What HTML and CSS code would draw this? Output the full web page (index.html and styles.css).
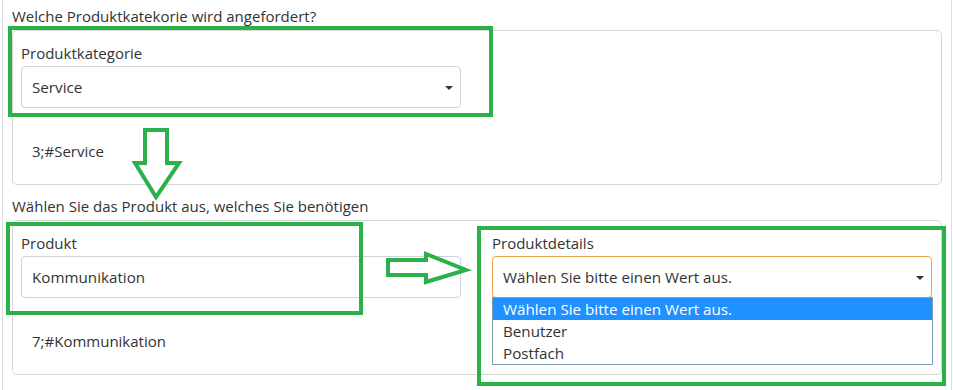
FILE: index.html
```html
<!DOCTYPE html>
<html lang="de">
<head>
<meta charset="utf-8">
<title>Produktanforderung</title>
<link rel="stylesheet" href="styles.css">
</head>
<body>
<div class="page">
  <div class="question">Welche Produktkatekorie wird angefordert?</div>
  <div class="card">
    <div class="row">
      <div class="col">
        <div class="label">Produktkategorie</div>
        <div class="select"><span class="select-text">Service</span><span class="caret"></span></div>
      </div>
    </div>
    <div class="value">3;#Service</div>
  </div>

  <div class="question q2">Wählen Sie das Produkt aus, welches Sie benötigen</div>
  <div class="card">
    <div class="row">
      <div class="col">
        <div class="label">Produkt</div>
        <div class="select"><span class="select-text">Kommunikation</span></div>
      </div>
      <div class="col dd-col">
        <div class="label">Produktdetails</div>
        <div class="select focused"><span class="select-text">Wählen Sie bitte einen Wert aus.</span><span class="caret"></span></div>
        <ul class="dropdown">
          <li class="opt active">Wählen Sie bitte einen Wert aus.</li>
          <li class="opt">Benutzer</li>
          <li class="opt">Postfach</li>
        </ul>
      </div>
    </div>
    <div class="value">7;#Kommunikation</div>
  </div>

  <svg class="annotations" width="953" height="390" viewBox="0 0 953 390" xmlns="http://www.w3.org/2000/svg">
    <g fill="none" stroke="#2bb04a" stroke-width="4" stroke-linejoin="miter">
      <rect x="10" y="28" width="481" height="87"/>
      <rect x="8" y="224" width="353" height="89"/>
      <rect x="479" y="228" width="465" height="156"/>
    </g>
    <g fill="#fff" stroke="#2bb04a" stroke-width="4" stroke-linejoin="miter">
      <polygon points="145,130 167,130 167,163 179,163 156,197 135,163 145,163"/>
      <polygon points="388,260 426,260 426,254 466,270 426,282 426,275 388,275"/>
    </g>
  </svg>
</div>
</body>
</html>
```

FILE: styles.css
```css
* { box-sizing: border-box; }

html, body {
  margin: 0;
  padding: 0;
  background: #fff;
}

body {
  font-family: "Open Sans", "Noto Sans", Arial, sans-serif;
  color: #212529;
  font-size: 15px;
}

.page {
  position: relative;
  width: 950px;
  height: 390px;
  margin-left: 2px;
  border-left: 1px solid #dcdcdc;
  border-right: 1px solid #dcdcdc;
  padding: 5px 9px 0;
}

.question {
  line-height: 22px;
  height: 22px;
  margin-bottom: 3px;
  color: #333;
}

.q2 { margin-top: 10px; }

.card {
  border: 1px solid #d6d6d6;
  border-radius: 5px;
  padding: 11px 8px 22px;
}

.row {
  display: flex;
  gap: 31px;
}

.col {
  width: 440px;
  position: relative;
}

.label {
  line-height: 22px;
  height: 22px;
  margin-bottom: 2px;
  color: #333;
}

.select {
  position: relative;
  height: 42px;
  border: 1px solid #ced4da;
  border-radius: 4px;
  padding: 0 10px;
  display: flex;
  align-items: center;
  font-size: 15.2px;
  color: #333;
}

.select.focused {
  border-color: #e9a54a;
}

.caret {
  position: absolute;
  right: 7px;
  top: 19px;
  width: 0;
  height: 0;
  border-left: 4px solid transparent;
  border-right: 4px solid transparent;
  border-top: 4px solid #333;
}

.value {
  padding: 32px 11px 0;
  line-height: 22px;
  height: 54px;
  color: #333;
}

.dropdown {
  position: absolute;
  left: 0;
  top: 65px;
  width: 441px;
  margin: 0;
  padding: 0;
  list-style: none;
  background: #fff;
  border: 1px solid #7f9db9;
  font-size: 15.2px;
  color: #333;
}

.opt {
  height: 22px;
  line-height: 22px;
  padding-left: 10px;
}

.opt.active {
  background: #1e90ff;
  color: #fff;
}

.annotations {
  position: absolute;
  left: -3px;
  top: 0;
  pointer-events: none;
}
```
